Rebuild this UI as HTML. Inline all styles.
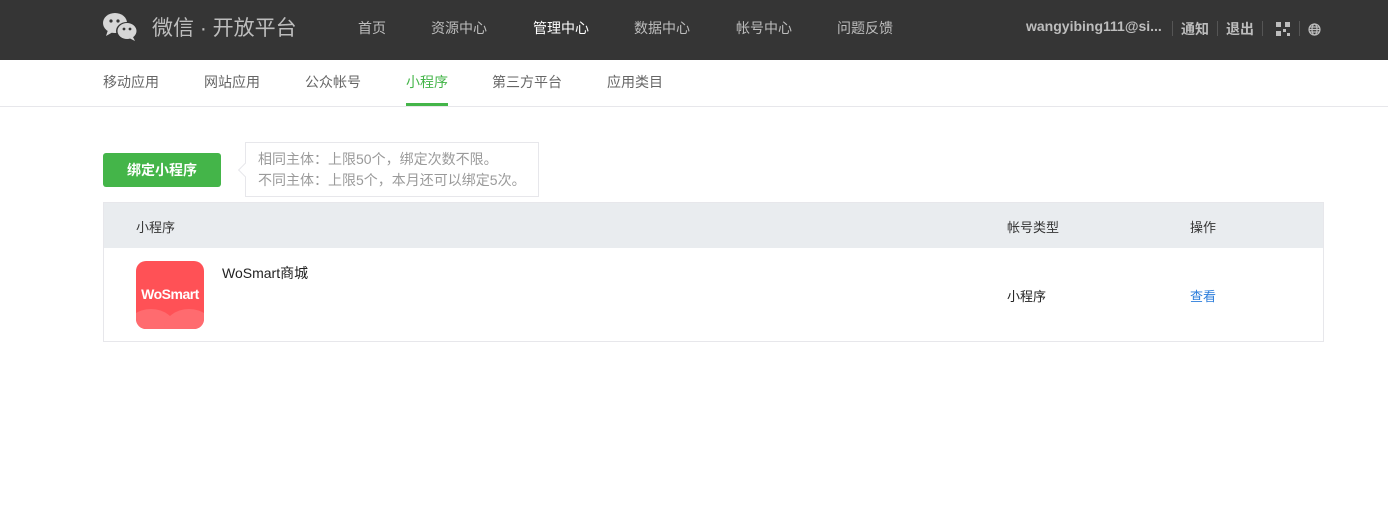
<!DOCTYPE html><html><head><meta charset="utf-8"><style>
*{margin:0;padding:0;box-sizing:border-box}
body{width:1388px;height:529px;background:#fff;font-family:"Liberation Sans","Noto Sans CJK SC",sans-serif;font-size:14px;color:#353535;position:relative;overflow:hidden}
.top{position:absolute;left:0;top:0;width:1388px;height:60px;background:#353535}
.a{position:absolute;white-space:nowrap}
.nav{color:#bdbdbd;font-size:14px;top:18px}
.sub{top:72px;color:#666;font-size:14px}
.sep{position:absolute;top:21px;width:1px;height:15px;background:#555}
</style></head><body>
<div class="top">
<svg class="a" style="left:103px;top:12px" width="37" height="30" viewBox="0 0 37 30"><ellipse cx="12" cy="11" rx="12" ry="10" fill="#d6d6d6"/><path d="M5 18 L3 24 L10 20Z" fill="#d6d6d6"/><ellipse cx="24" cy="19" rx="11" ry="9" fill="#353535"/><ellipse cx="24" cy="19" rx="9.5" ry="8" fill="#d6d6d6"/><path d="M30 25 L32 29 L26 26Z" fill="#d6d6d6"/><circle cx="8" cy="9" r="1.6" fill="#353535"/><circle cx="15" cy="9" r="1.6" fill="#353535"/><circle cx="21" cy="17" r="1.4" fill="#353535"/><circle cx="27" cy="17" r="1.4" fill="#353535"/></svg>
<div class="a" style="left:152px;top:12px;font-size:21px;color:#bdbdbd">微信 · 开放平台</div>
<div class="a nav" style="left:358px">首页</div>
<div class="a nav" style="left:431px">资源中心</div>
<div class="a nav" style="left:533px;color:#fff">管理中心</div>
<div class="a nav" style="left:634px">数据中心</div>
<div class="a nav" style="left:736px">帐号中心</div>
<div class="a nav" style="left:837px">问题反馈</div>
<div class="a" style="left:1026px;top:18px;color:#bdbdbd;font-size:14px;font-weight:bold">wangyibing111@si...</div>
<div class="sep" style="left:1172px"></div>
<div class="a" style="left:1181px;top:19px;color:#bdbdbd;font-weight:bold">通知</div>
<div class="sep" style="left:1217px"></div>
<div class="a" style="left:1226px;top:19px;color:#bdbdbd;font-weight:bold">退出</div>
<div class="sep" style="left:1262px"></div>
<svg class="a" style="left:1276px;top:22px" width="14" height="14" viewBox="0 0 14 14" fill="#bdbdbd"><rect x="0" y="0" width="5" height="5"/><rect x="9" y="0" width="5" height="5"/><rect x="0" y="9" width="5" height="5"/><rect x="7" y="7" width="3" height="3"/><rect x="11" y="11" width="3" height="3"/></svg>
<div class="sep" style="left:1299px"></div>
<svg class="a" style="left:1308px;top:23px" width="13" height="13" viewBox="0 0 13 13" fill="none" stroke="#bdbdbd" stroke-width="1.2"><circle cx="6.5" cy="6.5" r="5.5"/><ellipse cx="6.5" cy="6.5" rx="2.5" ry="5.5"/><path d="M1 6.5H12M2 4H11M2 9H11"/></svg>
</div>
<div class="a sub" style="left:103px">移动应用</div>
<div class="a sub" style="left:204px">网站应用</div>
<div class="a sub" style="left:305px">公众帐号</div>
<div class="a sub" style="left:406px;color:#44b549">小程序</div>
<div class="a" style="left:406px;top:103px;width:42px;height:3px;background:#44b549"></div>
<div class="a sub" style="left:492px">第三方平台</div>
<div class="a sub" style="left:607px">应用类目</div>
<div class="a" style="left:0;top:106px;width:1388px;height:1px;background:#e7e7eb"></div>
<div class="a" style="left:103px;top:153px;width:118px;height:34px;background:#44b549;border-radius:3px;color:#fff;font-size:14px;font-weight:bold;text-align:center;line-height:34px">绑定小程序</div>
<div class="a" style="left:245px;top:142px;width:294px;height:55px;border:1px solid #e7e7eb;background:#fff;color:#9a9a9a;font-size:14px;line-height:21px;padding:6px 0 0 12px">相同主体：上限50个，绑定次数不限。<br>不同主体：上限5个，本月还可以绑定5次。</div>
<div class="a" style="left:240px;top:165px;width:10px;height:10px;background:#fff;border-left:1px solid #e7e7eb;border-bottom:1px solid #e7e7eb;transform:rotate(45deg)"></div>
<div class="a" style="left:103px;top:202px;width:1221px;height:140px;border:1px solid #e7e7eb"></div>
<div class="a" style="left:104px;top:203px;width:1219px;height:45px;background:#e9ecef"></div>
<div class="a" style="left:136px;top:217px;font-size:13px">小程序</div>
<div class="a" style="left:1007px;top:217px;font-size:13px">帐号类型</div>
<div class="a" style="left:1190px;top:217px;font-size:13px">操作</div>
<div class="a" style="left:136px;top:261px;width:68px;height:68px;border-radius:10px;background:#ff5156;overflow:hidden">
<div style="position:absolute;left:-10px;top:48px;width:50px;height:40px;border-radius:50%;background:#ff6b6f"></div>
<div style="position:absolute;left:28px;top:48px;width:50px;height:40px;border-radius:50%;background:#ff6b6f"></div>
<div style="position:absolute;left:0;top:25px;width:68px;text-align:center;color:#fff;font-weight:bold;font-size:14px;letter-spacing:-0.5px">WoSmart</div></div>
<div class="a" style="left:222px;top:263px;font-size:14px;color:#222">WoSmart商城</div>
<div class="a" style="left:1007px;top:286px;font-size:13px;color:#222">小程序</div>
<div class="a" style="left:1190px;top:286px;font-size:13px;color:#2b7ddb">查看</div>
</body></html>
